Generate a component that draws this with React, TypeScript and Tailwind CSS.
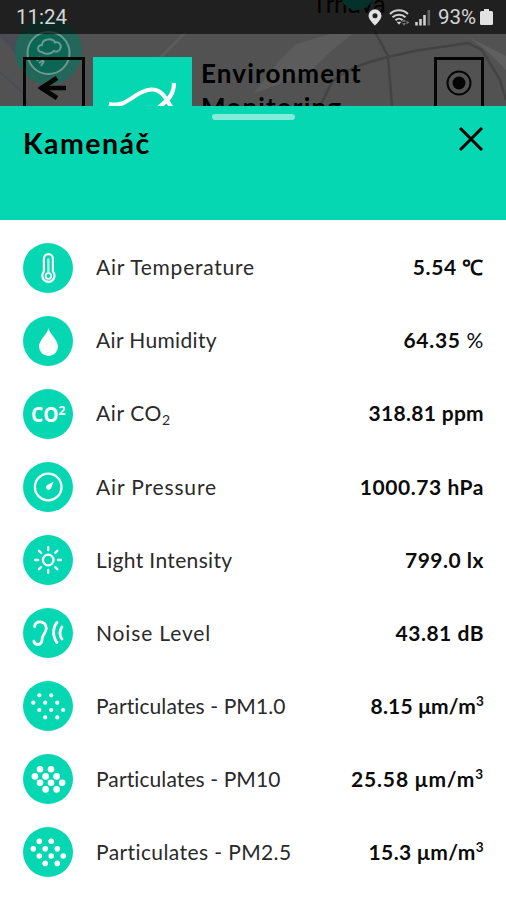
import * as React from "react";

interface Reading { id: string; label: React.ReactNode; labelClass: string; value: React.ReactNode; valueClass: string; icon: React.ReactNode }

type Dot = [number, number];

// dot rows shared by the particulate icons, relative to the 50px badge
const DOTS: Dot[] = [[16.3, 14.3], [28.2, 14.3], [10.3, 21.7], [22.2, 21.7], [34.3, 21.7], [16.3, 29], [28.2, 29], [40.2, 29], [22.2, 36.4], [34.3, 36.4]];
const DENSE_DOTS: Dot[] = [[17, 15.3], [28, 15.3], [11.9, 22.4], [22.6, 22.4], [33.6, 22.4], [17, 28.8], [28, 28.8], [39.2, 28.8], [22.6, 35.4], [33.6, 35.4]];

function Badge({ children }: { children: React.ReactNode }) {
  return (
    <span className="h-[50px] w-[50px] shrink-0 rounded-full bg-[#04d7b2]">
      <svg viewBox="0 0 50 50" className="h-full w-full" fill="none" stroke="white" strokeWidth="2.3" strokeLinecap="round" strokeLinejoin="round">
        {children}
      </svg>
    </span>
  );
}

function Dots({ dots, r }: { dots: Dot[]; r: number }) {
  return (
    <g fill="white" stroke="none">
      {dots.map(([x, y]) => <circle key={`${x}-${y}`} cx={x} cy={y} r={r} />)}
    </g>
  );
}

function Cubed() {
  return <sup className="top-[-8px] text-[13.5px]">3</sup>;
}

const READINGS: Reading[] = [
  {
    id: "temp", label: "Air Temperature", labelClass: "tracking-[0.75px]", value: "5.54 ℃", valueClass: "tracking-[0.6px]",
    icon: (
      <>
        <path d="M20.9 28.6V15.6a4.5 4.5 0 0 1 9 0v13a6.1 6.1 0 1 1-9 0Z" strokeWidth="2.2" />
        <path d="M25.4 16.5v13" strokeWidth="2.4" stroke="#b4f3e7" />
        <circle cx="25.4" cy="33" r="2.8" strokeWidth="1.7" />
      </>
    ),
  },
  {
    id: "humidity", label: "Air Humidity", labelClass: "tracking-[0.35px]", value: <>64.35 <span className="font-normal">%</span></>, valueClass: "tracking-[0.7px]",
    icon: <path d="M25.5 12C26.5 18 35 24 35 30.5a9.5 9.5 0 0 1-19 0C16 24 24.5 18 25.5 12Z" fill="white" stroke="none" />,
  },
  {
    id: "co2", label: <>Air CO<sub className="bottom-[-4px] text-[14px]">2</sub></>, labelClass: "tracking-[0.6px]", value: "318.81 ppm", valueClass: "tracking-[0.3px]",
    icon: (
      <text x="8" y="32.5" fontSize="20.5" fill="white" stroke="none" className="font-['Open_Sans'] font-bold" textLength="34.5" lengthAdjust="spacingAndGlyphs">
        CO<tspan dy="-6.5" fontSize="13">2</tspan>
      </text>
    ),
  },
  {
    id: "pressure", label: "Air Pressure", labelClass: "tracking-[0.85px]", value: "1000.73 hPa", valueClass: "tracking-[0.55px]",
    icon: (
      <>
        <circle cx="25.2" cy="25" r="13.3" />
        <path d="M30.6 19.6 28.2 26a2.6 2.6 0 1 1-3.8-3Z" fill="white" stroke="none" />
      </>
    ),
  },
  {
    id: "light", label: "Light Intensity", labelClass: "tracking-[0.35px]", value: "799.0 lx", valueClass: "tracking-[0.5px]",
    icon: (
      <>
        <circle cx="25.2" cy="25" r="5.3" />
        <path d="M25.2 12.2v3M25.2 34.8v3M12.2 25h3M35 25h3M16 15.8l2.1 2.1M32.3 32.1l2.1 2.1M34.4 15.8l-2.1 2.1M18.1 32.1 16 34.2" />
      </>
    ),
  },
  {
    id: "noise", label: "Noise Level", labelClass: "tracking-[0.85px]", value: "43.81 dB", valueClass: "tracking-[0.5px]",
    icon: (
      <>
        <path d="M11.5 18.5C12 15.5 14 13.8 16.8 13.8c4 0 6.7 3 6.5 6.7-.2 4.5-3.8 5.5-4.1 10.2-.2 3.7-1.8 5.8-4.3 5.8-2 0-3.6-1.200-4-3.3" strokeWidth="2.8" />
        <path d="M34 14.5c-4.5 5-4.5 14.5 0 20M39 19c-2.8 3.5-2.8 8.5 0 12" strokeWidth="2.8" />
      </>
    ),
  },
  { id: "pm1", label: "Particulates - PM1.0", labelClass: "tracking-[0.1px]", value: <>8.15 μm/m<Cubed /></>, valueClass: "tracking-[0.2px]", icon: <Dots dots={DOTS} r={2.1} /> },
  { id: "pm10", label: "Particulates - PM10", labelClass: "tracking-[0.1px]", value: <>25.58 μm/m<Cubed /></>, valueClass: "tracking-[0.85px]", icon: <Dots dots={DENSE_DOTS} r={3.3} /> },
  { id: "pm25", label: "Particulates - PM2.5", labelClass: "tracking-[0.4px]", value: <>15.3 μm/m<Cubed /></>, valueClass: "tracking-[0.4px]", icon: <Dots dots={DOTS} r={2.8} /> },
];

// Dimmed map that shows through behind the status bar and the page header
function MapBackdrop() {
  return (
    <svg viewBox="0 0 506 106" className="absolute inset-0 h-full w-full" fill="none">
      <path d="M0 34h22L18 58C12 50 8 42 0 38Z" fill="#4a4c58" />
      <path d="M0 72 22 92 28 106" stroke="#4a4c58" strokeWidth="1.5" />
      <path d="M253 94 278 62 296 44 330 34H352L330 52 314 68 290 80Z" fill="#5c5c5c" />
      <path d="M160 58 176 42 186 32" stroke="#5b5b5b" strokeWidth="3" />
      <path d="M470 38 506 56V70L488 52Z" fill="#5f5f5f" />
      <path d="M374 30 388 56 392 106M320 106 332 82C350 64 390 56 420 50L468 43 482 50 500 80 506 100" stroke="#434343" strokeWidth="2.5" />
      <circle cx="48.5" cy="51" r="33.5" fill="#23665a" />
      <circle cx="48.5" cy="53" r="21" fill="#0b6654" stroke="#6b9a90" strokeWidth="2" />
      <path d="M42 52c-5 0-5.5-7 0-7 0-7 11-7 13-2.5 5-1 7 3.5 5 6.5-1 3-4 3-6 2-3 3-9 4-12 1ZM40 57l-3 4M46 58l-7 5M44 61l-3 5" stroke="#6b9a90" strokeWidth="2" />
      <text x="312" y="13" fontSize="24.5" fill="#050505" className="font-[Roboto]">Trnava</text>
      <circle cx="357" cy="-7" r="17" fill="#0a7a66" />
    </svg>
  );
}

function StatusBar() {
  return (
    <div className="relative flex h-[34px] shrink-0 items-center bg-black/60 pl-4 pr-[13px] text-[#d6d6d6]">
      <span className="font-[Roboto] text-[20.5px]">11:24</span>
      <svg viewBox="0 0 64 20" width="64" height="20" className="ml-auto" fill="none">
        {/* location pin */}
        <path d="M7 2.3a6.5 6.5 0 0 1 6.5 6.5c0 4-6.5 9.7-6.5 9.7S.5 12.8.5 8.800A6.5 6.5 0 0 1 7 2.3Zm0 3.9a2.5 2.5 0 1 0 0 5 2.5 2.5 0 0 0 0-5Z" fill="#e2e2e2" fillRule="evenodd" />
        {/* wifi, with the small traffic arrows at its foot */}
        <path d="M22 7c5-5 13-5 18 0M24.5 10.3c3.5-3.5 9.5-3.5 13 0M27.5 13.3c2-2 5-2 7 0" stroke="#cfcfcf" strokeWidth="2" />
        <path d="m28.500 14.8 2.5 3 2.5-3Z" fill="#cfcfcf" />
        <path d="m34 15 2-3 2 3ZM34 16h4l-2 3ZM38.5 13.5l3 2-3 2Z" fill="#707070" />
        {/* signal */}
        <path d="M48.5 15v3.5M52.5 12v6.5M56.5 8v10.5" stroke="#cfcfcf" strokeWidth="2.6" />
        <path d="M60.8 3v15.5" stroke="#626262" strokeWidth="2.6" />
      </svg>
      <span className="ml-[6px] font-[Roboto] text-[20.5px]">93%</span>
      <svg viewBox="0 0 13 18" width="13" height="18" className="ml-[4px]"><path d="M4 1h5v2h2.5A1.5 1.5 0 0 1 13 4.5v11a1.5 1.5 0 0 1-1.5 1.5h-10A1.5 1.5 0 0 1 0 15.5v-11A1.5 1.5 0 0 1 1.5 3H4Z" fill="#e2e2e2" /></svg>
    </div>
  );
}

export default function App() {
  return (
    <div className="flex h-[900px] w-full flex-col overflow-hidden bg-white font-[Lato,sans-serif] text-black">
      <div className="relative h-[106px] shrink-0 overflow-hidden bg-[#525252]">
        <MapBackdrop />
        <StatusBar />
        <header className="relative mt-[23px] flex items-start pl-[23px] pr-[22px]">
          <div className="flex h-[62px] w-[62px] shrink-0 items-center justify-center border-[3.5px] border-[#050505]">
            <svg width="32" height="24" viewBox="0 0 32 24" fill="none" stroke="#050505" strokeWidth="4.6"><path d="M28 12H4M19 2 3.5 12 19 22" /></svg>
          </div>
          <div className="ml-2 h-[62px] w-[99px] shrink-0 bg-[#04d7b2]">
            <svg viewBox="0 0 99 62" className="h-full w-full" fill="none" stroke="white" strokeWidth="4.2">
              <path d="M16 47C36 51 40 34 58 32.5 70 32 74 44 80 53M81 26C81 38 75 43 64 52" />
            </svg>
          </div>
          <h1 className="ml-[9px] -mt-px text-[26px] font-bold leading-[34px] tracking-[1.15px]">Environment<br />Monitoring</h1>
          <div className="ml-auto flex h-[52px] w-[50px] items-center justify-center border-[3px] border-[#050505]">
            <svg width="26" height="26" viewBox="0 0 26 26" fill="none" className="-mt-px"><circle cx="13" cy="13" r="11.5" stroke="#050505" strokeWidth="2" /><circle cx="13" cy="13" r="6.5" fill="#050505" /></svg>
          </div>
        </header>
      </div>

      <div className="relative flex h-[114px] shrink-0 items-start justify-between bg-[#04d7b2] px-[23px] pt-[20px]">
        <span className="absolute left-[212px] top-2 h-1.5 w-[83px] rounded-full bg-white/50" />
        <h2 className="-mt-px text-[28.5px] font-bold leading-9 tracking-[1.5px]">Kamenáč</h2>
        <svg width="24" height="24" viewBox="0 0 24 24" fill="none" stroke="black" strokeWidth="3" className="mt-px"><path d="m1 1 22 22M23 1 1 23" /></svg>
      </div>

      <ul className="pt-[11px]">
        {READINGS.map((r) => (
          <li key={r.id} className="flex h-[73.1px] items-center whitespace-nowrap pl-[23px] pr-[22px] text-[21px]">
            <Badge>{r.icon}</Badge>
            <span className={`ml-[23px] -mt-px text-[#2a2a2a] ${r.labelClass}`}>{r.label}</span>
            <span className={`ml-auto -mt-px font-bold text-[#0c0c0c] ${r.valueClass}`}>{r.value}</span>
          </li>
        ))}
      </ul>
    </div>
  );
}
